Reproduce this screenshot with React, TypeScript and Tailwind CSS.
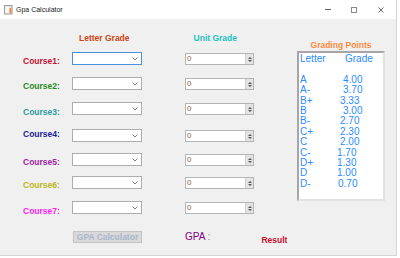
import React from "react";

const courses = [
  { name: "Course1:", color: "text-[#c41034]", row: "mt-[8px]", lab: "mt-[4px]", focus: true },
  { name: "Course2:", color: "text-[#2a8a22]", row: "mt-[12px]", lab: "mt-[4px]", focus: false },
  { name: "Course3:", color: "text-[#2a9c9c]", row: "mt-[12px]", lab: "mt-[5px]", focus: false },
  { name: "Course4:", color: "text-[#22229a]", row: "mt-[14px]", lab: "mt-[0px]", focus: false },
  { name: "Course5:", color: "text-[#a024a8]", row: "mt-[11px]", lab: "mt-[4px]", focus: false },
  { name: "Course6:", color: "text-[#bcb622]", row: "mt-[10px]", lab: "mt-[4px]", focus: false },
  { name: "Course7:", color: "text-[#ff1cf4]", row: "mt-[12px]", lab: "mt-[5px]", focus: false },
];

const grades = [
  { l: "A", v: "4.00", w: "w-[43px]" },
  { l: "A-", v: "3.70", w: "w-[43px]" },
  { l: "B+", v: "3.33", w: "w-[40px]" },
  { l: "B", v: "3.00", w: "w-[43px]" },
  { l: "B-", v: "2.70", w: "w-[40px]" },
  { l: "C+", v: "2.30", w: "w-[40px]" },
  { l: "C", v: "2.00", w: "w-[40px]" },
  { l: "C-", v: "1.70", w: "w-[37px]" },
  { l: "D+", v: "1.30", w: "w-[37px]" },
  { l: "D", v: "1.00", w: "w-[37px]" },
  { l: "D-", v: "0.70", w: "w-[38px]" },
];

function Combo({ focus }: { focus: boolean }) {
  return (
    <div
      className={
        "w-[70px] h-[13px] bg-white border flex items-center justify-end pr-[3px] " +
        (focus ? "border-[#4a90dc]" : "border-[#adadad]")
      }
    >
      <svg width="6" height="4" viewBox="0 0 6 4">
        <polyline points="0.5,0.5 3,3 5.5,0.5" fill="none" stroke="#707070" strokeWidth="0.9" />
      </svg>
    </div>
  );
}

function Spinner() {
  return (
    <div className="w-[69px] h-[12px] mt-[1px] bg-white border border-[#b4b4b4] flex">
      <div className="flex-1 text-[8px] leading-[10px] pl-[1px] text-[#8a6446]">0</div>
      <div className="w-[8px] h-full bg-[#e4e4e4] border-l border-[#cfcfcf] flex flex-col items-center justify-center gap-[1px]">
        <svg width="4" height="2" viewBox="0 0 4 2">
          <polygon points="0,2 2,0 4,2" fill="#555" />
        </svg>
        <svg width="4" height="2" viewBox="0 0 4 2">
          <polygon points="0,0 2,2 4,0" fill="#555" />
        </svg>
      </div>
    </div>
  );
}

export default function App() {
  return (
    <div className="w-[400px] h-[258px] bg-white overflow-hidden font-['Liberation_Sans',Arial,sans-serif]">
      <div className="w-[397px] h-[256px] bg-[#f0f0f0] border-r border-b border-[#d4d4d4] flex flex-col">
        {/* Title bar */}
        <div className="h-[19px] bg-white flex items-center shrink-0">
          <div className="ml-[4px] w-[9px] h-[10px]">
            <svg width="9" height="10" viewBox="0 0 9 10">
              <rect x="0.5" y="0.5" width="7.5" height="8.5" fill="#e6e6e6" stroke="#9c9c9c" />
              <rect x="1.5" y="1.5" width="3.5" height="6.5" fill="#f7f7f7" />
              <rect x="5.5" y="3" width="2" height="5" fill="#f08a3a" />
            </svg>
          </div>
          <span className="ml-[3px] text-[7px] leading-[9px] text-[#222]">Gpa Calculator</span>
          <div className="ml-auto flex items-center">
            <div className="w-[6px] h-[1px] bg-[#666] mr-[20px]" />
            <div className="w-[6px] h-[6px] border border-[#888] mr-[21px]" />
            <svg width="6" height="6" viewBox="0 0 6 6" className="mr-[12px]">
              <path d="M0.5 0.5 L5.5 5.5 M5.5 0.5 L0.5 5.5" stroke="#555" strokeWidth="0.9" />
            </svg>
          </div>
        </div>

        {/* Content */}
        <div className="flex">
          {/* Left */}
          <div className="w-[297px] flex flex-col">
            <div className="flex mt-[13px] h-[12px] items-center font-bold text-[8.5px] leading-[12px]">
              <div className="w-[79px]" />
              <div className="text-[#cc4412]">Letter Grade</div>
              <div className="w-[64px]" />
              <div className="text-[#22c0bf]">Unit Grade</div>
            </div>
            {courses.map((c) => (
              <div key={c.name} className={"flex h-[13px] items-start " + c.row}>
                <div className={"w-[72px] pl-[23px] font-bold text-[8.5px] leading-[10px] " + c.lab + " " + c.color}>
                  {c.name}
                </div>
                <Combo focus={c.focus} />
                <div className="w-[43px]" />
                <Spinner />
              </div>
            ))}
            <div className="flex items-center h-[12px] mt-[17px]">
              <div className="ml-[73px] w-[69px] h-[12px] bg-[#d9d9d9] border border-[#c4c4c4] flex items-center justify-center font-bold text-[8.5px] leading-[10px] text-[#a8b8cc]">
                GPA Calculator
              </div>
              <div className="ml-[43px] text-[10px] leading-[12px] text-[#800080]">
                GPA <span className="text-[#8a8a8a]">:</span>
              </div>
              <div className="ml-[51px] mt-[5px] font-bold text-[8.5px] leading-[10px] text-[#c8102e]">Result</div>
            </div>
          </div>

          {/* Right */}
          <div className="w-[88px] flex flex-col">
            <div className="mt-[21px] h-[10px] text-center font-bold text-[8.5px] leading-[10px] text-[#ff8a3c]">
              Grading Points
            </div>
            <div className="mt-[1px] h-[150px] bg-white border-2 border-t-[#a6a6a6] border-l-[#a6a6a6] border-r-[#e2e2e2] border-b-[#e2e2e2] pt-[1px] pl-[1px] text-[10px] leading-[10.4px] text-[#2a8cff]">
              <div className="flex">
                <span className="w-[45px]">Letter</span>
                <span>Grade</span>
              </div>
              <div className="h-[10.4px]" />
              {grades.map((g) => (
                <div key={g.l} className="flex">
                  <span className={g.w}>{g.l}</span>
                  <span>{g.v}</span>
                </div>
              ))}
            </div>
          </div>
        </div>
      </div>
    </div>
  );
}
